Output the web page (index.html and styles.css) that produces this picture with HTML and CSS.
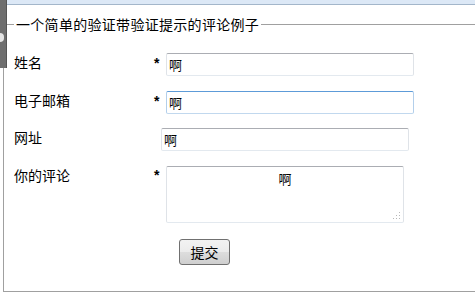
FILE: index.html
```html
<!DOCTYPE html>
<html lang="zh-CN">
<head>
  <meta charset="UTF-8">
  <title>评论例子</title>
  <link rel="stylesheet" href="styles.css">
</head>
<body>
  <div class="topbar"></div>
  <div class="side-tab"><span class="tab-knob"></span></div>

  <form class="comment-form">
    <fieldset class="box">
      <legend>一个简单的验证带验证提示的评论例子</legend>

      <div class="row">
        <label for="name">姓名</label>
        <em class="req">*</em>
        <input type="text" id="name" class="field" value="啊">
      </div>

      <div class="row">
        <label for="email">电子邮箱</label>
        <em class="req">*</em>
        <input type="text" id="email" class="field focus" value="啊">
      </div>

      <div class="row">
        <label for="url">网址</label>
        <input type="text" id="url" class="field no-req" value="啊">
      </div>

      <div class="row row-top">
        <label for="comment">你的评论</label>
        <em class="req">*</em>
        <span class="area-wrap">
          <textarea id="comment" class="area">啊</textarea>
          <svg class="grip" width="8" height="8" viewBox="0 0 8 8">
            <rect x="6" y="0" width="1" height="1" fill="#b8b8b8"/>
            <rect x="3" y="3" width="1" height="1" fill="#b8b8b8"/>
            <rect x="6" y="3" width="1" height="1" fill="#b8b8b8"/>
            <rect x="0" y="6" width="1" height="1" fill="#b8b8b8"/>
            <rect x="3" y="6" width="1" height="1" fill="#b8b8b8"/>
            <rect x="6" y="6" width="1" height="1" fill="#b8b8b8"/>
          </svg>
        </span>
      </div>

      <div class="actions">
        <button type="button" class="submit">提交</button>
      </div>
    </fieldset>
  </form>
</body>
</html>
```

FILE: styles.css
```css
* {
  box-sizing: border-box;
}

html, body {
  margin: 0;
  padding: 0;
  overflow: hidden;
  background: #fff;
  font-family: "Noto Sans CJK SC", "Liberation Sans", sans-serif;
  font-size: 14px;
  color: #000;
}

.topbar {
  height: 5px;
  background: #dce8f6;
  border-bottom: 1px solid #a3b6ca;
}

.side-tab {
  position: absolute;
  top: 0;
  left: 0;
  width: 7px;
  height: 68px;
  background: #6e6e6e;
  border-right: 1px solid #555;
}

.tab-knob {
  position: absolute;
  top: 33px;
  left: 0;
  width: 4px;
  height: 9px;
  border-radius: 0 5px 5px 0;
  background: #e4e4e4;
}

.comment-form {
  margin: 0;
}

.box {
  margin: 9px 0 0 3px;
  width: calc(100% - 3px);
  border: 1px solid #a0a0a0;
  border-right: none;
  padding: 19px 10px 26px 10px;
  min-width: 0;
}

.box legend {
  padding: 0 2px;
  line-height: 20px;
  font-size: 14px;
  letter-spacing: 0.3px;
}

.row {
  display: flex;
  align-items: center;
  height: 23px;
  margin-bottom: 14.5px;
}

.row label {
  width: 139px;
  line-height: 20px;
  padding-bottom: 5px;
}

.req {
  align-self: flex-start;
  width: 13px;
  margin-top: 3px;
  font-style: normal;
  font-weight: bold;
  font-family: "Liberation Sans", sans-serif;
  font-size: 14px;
  line-height: 14px;
  padding-left: 1px;
}

.field {
  width: 248px;
  height: 23px;
  padding: 0 2px;
  font-family: "Noto Sans CJK SC", sans-serif;
  font-size: 13px;
  color: #000;
  border: 1px solid;
  border-color: #abadb3 #dfe3e8 #e3e9ef #dfe3e8;
  border-radius: 2px;
  outline: none;
  background: #fff;
}

.field.focus {
  border-color: #5d9bd8 #b3cfeb #c1d8ee #b3cfeb;
}

.field.no-req {
  margin-left: 8px;
}

.row-top {
  align-items: flex-start;
  height: 57px;
  margin-bottom: 16px;
}

.row-top label {
  margin-top: -1px;
  padding-bottom: 0;
}

.row-top .req {
  margin-top: 2px;
}

.area-wrap {
  position: relative;
  display: block;
  width: 238px;
  height: 57px;
}

.area {
  display: block;
  width: 238px;
  height: 57px;
  padding: 4px 2px;
  resize: none;
  text-align: center;
  font-family: "Noto Sans CJK SC", sans-serif;
  font-size: 13px;
  line-height: 16px;
  border: 1px solid;
  border-color: #abadb3 #dfe3e8 #e3e9ef #dfe3e8;
  border-radius: 2px;
  outline: none;
  overflow: hidden;
}

.grip {
  position: absolute;
  right: 3px;
  bottom: 3px;
}

.actions {
  padding-left: 165px;
}

.submit {
  display: block;
  width: 51px;
  height: 26px;
  padding: 0;
  font-family: "Noto Sans CJK SC", sans-serif;
  font-size: 14px;
  color: #000;
  border: 1px solid #707070;
  border-radius: 3px;
  background: linear-gradient(#f2f2f2 0%, #ebebeb 50%, #dddddd 51%, #cfcfcf 100%);
  cursor: pointer;
}
```
